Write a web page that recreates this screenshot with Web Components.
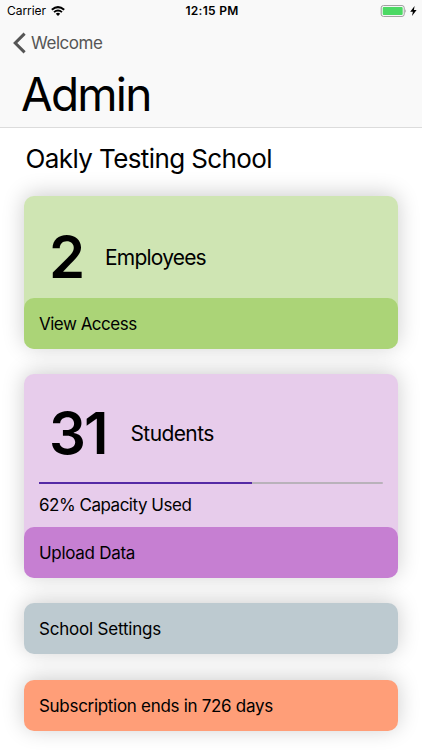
<!DOCTYPE html>
<html lang="en">
<head>
<meta charset="UTF-8">
<meta name="viewport" content="width=device-width, initial-scale=1.0">
<title>Admin</title>
<style>
  body {
    margin: 0;
    height: 750px;
    overflow: hidden;
    background: #ffffff;
    color: #000000;
    font-family: Inter, "Liberation Sans", sans-serif;
  }
</style>
</head>
<body>
<admin-screen></admin-screen>

<script>
class StatusBar extends HTMLElement {
  connectedCallback() {
    this.attachShadow({ mode: 'open' });
    this.shadowRoot.innerHTML = `
      <style>
        :host {
          display: grid;
          grid-template-columns: 1fr auto 1fr;
          align-items: center;
          height: 22px;
          padding: 0 5px 0 7px;
          font-size: 12px;
          line-height: 22px;
        }
        .carrier, .power {
          display: flex;
          align-items: center;
        }
        .carrier {
          gap: 5px;
          letter-spacing: -0.05px;
        }
        .time {
          font-weight: 600;
          letter-spacing: 0.3px;
        }
        .power {
          justify-content: flex-end;
          gap: 3px;
        }
        svg {
          display: block;
        }
      </style>
      <div class="carrier">
        <span>Carrier</span>
        <svg width="14" height="10" viewBox="0 0 14 10">
          <path d="M0.8 3.8 Q7 -1.6 13.2 3.8" fill="none" stroke="#000" stroke-width="2"/>
          <path d="M3 6.1 Q7 2.7 11 6.1" fill="none" stroke="#000" stroke-width="1.9"/>
          <path d="M4.8 7.7 Q7 5.8 9.2 7.7 L7 9.9 Z" fill="#000"/>
        </svg>
      </div>
      <span class="time">${this.getAttribute('time')}</span>
      <div class="power">
        <svg width="27" height="12" viewBox="0 0 27 12">
          <rect x="1.2" y="0.6" width="23" height="10.8" rx="2.2" fill="#fff" stroke="#999" stroke-width="1"/>
          <rect x="2.7" y="2" width="20" height="8" rx="1" fill="#4cd964"/>
          <path d="M25.3 4 Q26.9 6 25.3 8 Z" fill="#999"/>
        </svg>
        <svg width="7" height="10" viewBox="0 0 7 10">
          <path d="M4.6 0 L0.2 5.7 H2.9 L2 10 L6.6 4 H3.9 Z" fill="#000"/>
        </svg>
      </div>
    `;
  }
}

customElements.define('status-bar', StatusBar);

class NavHeader extends HTMLElement {
  connectedCallback() {
    this.attachShadow({ mode: 'open' });
    this.shadowRoot.innerHTML = `
      <style>
        :host {
          display: block;
          box-sizing: border-box;
          height: 128px;
          background: #f9f9f9;
          border-bottom: 1px solid #dcdcdc;
        }
        .back {
          display: flex;
          align-items: center;
          gap: 5px;
          height: 42px;
          padding-left: 13px;
          color: #555555;
          font-size: 17px;
          letter-spacing: -0.45px;
        }
        h1 {
          margin: 2px 0 0 21px;
          font-size: 46px;
          font-weight: 400;
          line-height: 56px;
          letter-spacing: -1.8px;
        }
      </style>
      <status-bar time="12:15 PM"></status-bar>
      <div class="back">
        <svg width="13" height="22" viewBox="0 0 13 22">
          <path d="M11.6 1.6 L2.2 11 L11.6 20.4" fill="none" stroke="#555" stroke-width="3"/>
        </svg>
        <span>${this.getAttribute('back')}</span>
      </div>
      <h1><slot></slot></h1>
    `;
  }
}

customElements.define('nav-header', NavHeader);

class ActionBar extends HTMLElement {
  connectedCallback() {
    this.attachShadow({ mode: 'open' });
    this.shadowRoot.innerHTML = `
      <style>
        :host {
          display: block;
          box-sizing: border-box;
          height: 51px;
          padding: 0 15px;
          border-radius: 10px;
          background: var(--bar-color);
          box-shadow: var(--bar-shadow, none);
          font-size: 17px;
          line-height: 52px;
          white-space: nowrap;
        }
      </style>
      <slot></slot>
    `;
  }
}

customElements.define('action-bar', ActionBar);

class StatCard extends HTMLElement {
  connectedCallback() {
    this.attachShadow({ mode: 'open' });
    this.shadowRoot.innerHTML = `
      <style>
        :host {
          display: flex;
          flex-direction: column;
          border-radius: 10px;
          background: var(--card-color);
          box-shadow: var(--card-shadow);
        }
        .body {
          flex: 1;
          padding-top: var(--card-top, 26px);
        }
        .stat {
          display: flex;
          align-items: center;
          height: 70px;
          padding-left: 25px;
        }
        .count {
          font-size: 58px;
          font-weight: 600;
          line-height: 70px;
          letter-spacing: var(--count-spacing, 0);
          width: var(--count-width);
        }
        .label {
          font-size: 21px;
          letter-spacing: var(--label-spacing, 0);
        }
      </style>
      <div class="body">
        <div class="stat">
          <span class="count">${this.getAttribute('count')}</span>
          <span class="label">${this.getAttribute('label')}</span>
        </div>
        <slot></slot>
      </div>
      <slot name="action"></slot>
    `;
  }
}

customElements.define('stat-card', StatCard);

class CapacityMeter extends HTMLElement {
  connectedCallback() {
    const percent = this.getAttribute('percent');
    this.attachShadow({ mode: 'open' });
    this.shadowRoot.innerHTML = `
      <style>
        :host {
          display: block;
          padding: 14px 15px 0;
          font-size: 17px;
          line-height: 24px;
        }
        .track {
          height: 2px;
          margin-bottom: 9px;
          border-radius: 1px;
          background: #b9b2ba;
        }
        .fill {
          width: ${percent}%;
          height: 2px;
          background: #552aa5;
        }
      </style>
      <div class="track"><div class="fill"></div></div>
      <span>${percent}% Capacity Used</span>
    `;
  }
}

customElements.define('capacity-meter', CapacityMeter);

class AdminScreen extends HTMLElement {
  connectedCallback() {
    this.attachShadow({ mode: 'open' });
    this.shadowRoot.innerHTML = `
      <style>
        :host {
          display: block;
          --card-shadow: 0 -2px 22px rgba(0, 0, 0, 0.2);
        }
        h2 {
          margin: 0;
          padding: 13px 0 0 25.5px;
          height: 55px;
          font-size: 26px;
          font-weight: 400;
          line-height: 36px;
          letter-spacing: -0.6px;
        }
        main {
          display: flex;
          flex-direction: column;
          gap: 25.5px;
          padding: 0 24px;
        }
        .employees {
          height: 152.5px;
          --card-color: #cfe5b3;
          --bar-color: #abd477;
          --count-width: 56px;
          --label-spacing: -0.8px;
        }
        .students {
          height: 203.5px;
          --card-color: #e7cceb;
          --bar-color: #c67fd2;
          --card-top: 24px;
          --count-width: 81.5px;
          --count-spacing: -2px;
          --label-spacing: -0.6px;
        }
        .settings {
          letter-spacing: -0.2px;
          --bar-color: #bdcad0;
          --bar-shadow: var(--card-shadow);
        }
        .subscription {
          letter-spacing: -0.3px;
          --bar-color: #ff9e78;
          --bar-shadow: var(--card-shadow);
        }
        .employees action-bar {
          letter-spacing: -0.5px;
        }
        .students action-bar {
          letter-spacing: -0.3px;
        }
        capacity-meter {
          letter-spacing: -0.48px;
        }
      </style>
      <nav-header back="Welcome">Admin</nav-header>
      <h2>Oakly Testing School</h2>
      <main>
        <stat-card class="employees" count="2" label="Employees">
          <action-bar slot="action">View Access</action-bar>
        </stat-card>
        <stat-card class="students" count="31" label="Students">
          <capacity-meter percent="62"></capacity-meter>
          <action-bar slot="action">Upload Data</action-bar>
        </stat-card>
        <action-bar class="settings">School Settings</action-bar>
        <action-bar class="subscription">Subscription ends in 726 days</action-bar>
      </main>
    `;
  }
}

customElements.define('admin-screen', AdminScreen);
</script>
</body>
</html>
